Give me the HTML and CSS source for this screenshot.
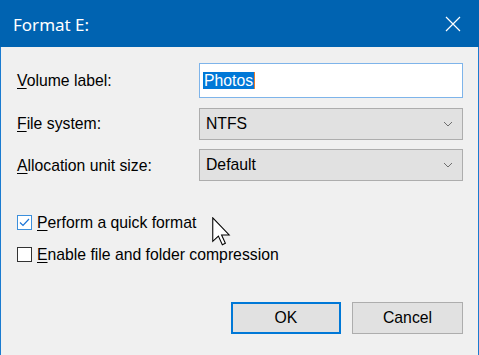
FILE: index.html
```html
<!DOCTYPE html>
<html>
<head>
<meta charset="utf-8">
<link rel="stylesheet" href="styles.css">
</head>
<body>
<div class="window">
  <div class="titlebar">
    <span class="title">Format E:</span>
    <svg class="close" width="16" height="16" viewBox="0 0 16 16"><path d="M1 1 L15 15 M15 1 L1 15" stroke="#fff" stroke-width="1.2" fill="none"/></svg>
  </div>
  <div class="content">
    <div class="form">
      <label class="lbl"><u>V</u>olume label:</label>
      <div class="input"><span class="sel">Photos</span><span class="caret"></span></div>
      <label class="lbl"><u>F</u>ile system:</label>
      <div class="select"><span>NTFS</span><svg width="10" height="6" viewBox="0 0 10 6"><path d="M1 1 L5 5 L9 1" stroke="#6e6e6e" stroke-width="1" fill="none"/></svg></div>
      <label class="lbl"><u>A</u>llocation unit size:</label>
      <div class="select"><span>Default</span><svg width="10" height="6" viewBox="0 0 10 6"><path d="M1 1 L5 5 L9 1" stroke="#6e6e6e" stroke-width="1" fill="none"/></svg></div>
    </div>
    <div class="checks">
      <div class="check"><span class="box checked"><svg width="11" height="9" viewBox="0 0 11 9"><path d="M1 4.5 L4 7.5 L10 1" stroke="#1a73d6" stroke-width="1.2" fill="none"/></svg></span><span><u>P</u>erform a quick format</span></div>
      <div class="check"><span class="box"></span><span><u>E</u>nable file and folder compression</span></div>
    </div>
    <div class="buttons">
      <button class="btn default">OK</button>
      <button class="btn">Cancel</button>
    </div>
  </div>
  <svg class="cursor" width="19" height="29" viewBox="0 0 12.5 19"><path d="M0.5 0.5 L0.5 16 L4.2 12.5 L6.8 18.2 L8.8 17.3 L6.3 11.8 L11.3 11.8 Z" fill="#fff" stroke="#000" stroke-width="0.7" stroke-linejoin="miter"/></svg>
</div>
</body>
</html>
```

FILE: styles.css
```css
* { box-sizing: border-box; }
html, body { margin: 0; padding: 0; }
body { width: 479px; height: 355px; overflow: hidden; background: #f0f0f0; font-family: "Liberation Sans", Arial, sans-serif; font-size: 15.75px; color: #000; }
.window { position: relative; width: 479px; height: 355px; border-left: 1px solid #1a7bd0; border-right: 1px solid #1a7bd0; background: #f0f0f0; }
.titlebar { height: 47px; background: #0063b1; display: flex; align-items: center; justify-content: space-between; padding: 0 18px 0 13px; margin: 0 -1px; }
.title { font-family: "Noto Sans", "Open Sans", sans-serif; font-size: 17px; color: #fff; padding-top: 2px; }
.close { display: block; margin-top: 0; }
.content { padding: 16px 15px 0 16px; }
.form { display: grid; grid-template-columns: 182px 264px; row-gap: 10px; align-items: center; }
.form .select:last-child { margin-top: -1px; }
.lbl { line-height: 18px; }
u { text-decoration: underline; text-underline-offset: 2px; }
.input { height: 35px; background: #fff; border: 1px solid #7eb4ea; display: flex; align-items: center; padding-left: 3px; }
.sel { background: #0078d7; color: #fff; line-height: 17px; height: 17px; padding: 0 1px; }
.caret { width: 1px; height: 17px; background: #e87b2b; }
.select { height: 32px; background: #e1e1e1; border: 1px solid #adadad; display: flex; align-items: center; justify-content: space-between; padding: 0 9px 0 6px; }
.select svg { display: block; }
.checks { margin-top: 34px; display: flex; flex-direction: column; gap: 17px; }
.check { display: flex; align-items: center; gap: 5px; height: 15px; }
.box { width: 15px; height: 15px; border: 1px solid #333; background: #fff; display: flex; align-items: center; justify-content: center; }
.box.checked { border-color: #3c8fdc; }
.buttons { margin-top: 40px; display: flex; justify-content: flex-end; gap: 11px; padding-right: 0; }
.btn { width: 111px; height: 32px; background: #e1e1e1; border: 1px solid #adadad; font-family: "Liberation Sans", Arial, sans-serif; font-size: 15.75px; color: #000; padding: 0; }
.btn.default { border: 2px solid #0078d7; width: 110px; }
.cursor { position: absolute; left: 211px; top: 217px; }
```
